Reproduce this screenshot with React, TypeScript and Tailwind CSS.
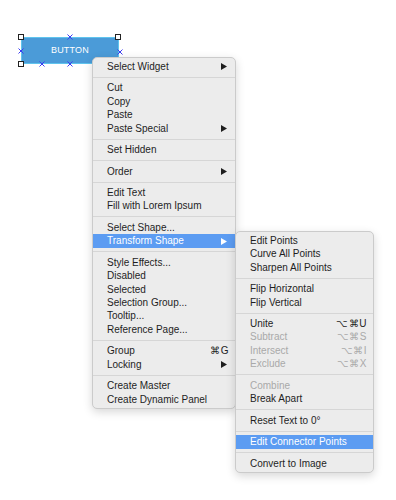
import React from "react";

type Item =
  | { sep: true }
  | { label: string; sub?: boolean; sc?: string; dis?: boolean; hl?: boolean; sep?: false };

const S: Item = { sep: true };

const mainItems: Item[] = [
  { label: "Select Widget", sub: true },
  S,
  { label: "Cut" },
  { label: "Copy" },
  { label: "Paste" },
  { label: "Paste Special", sub: true },
  S,
  { label: "Set Hidden" },
  S,
  { label: "Order", sub: true },
  S,
  { label: "Edit Text" },
  { label: "Fill with Lorem Ipsum" },
  S,
  { label: "Select Shape..." },
  { label: "Transform Shape", sub: true, hl: true },
  S,
  { label: "Style Effects..." },
  { label: "Disabled" },
  { label: "Selected" },
  { label: "Selection Group..." },
  { label: "Tooltip..." },
  { label: "Reference Page..." },
  S,
  { label: "Group", sc: "⌘G" },
  { label: "Locking", sub: true },
  S,
  { label: "Create Master" },
  { label: "Create Dynamic Panel" },
];

const subItems: Item[] = [
  { label: "Edit Points" },
  { label: "Curve All Points" },
  { label: "Sharpen All Points" },
  S,
  { label: "Flip Horizontal" },
  { label: "Flip Vertical" },
  S,
  { label: "Unite", sc: "⌥⌘U" },
  { label: "Subtract", sc: "⌥⌘S", dis: true },
  { label: "Intersect", sc: "⌥⌘I", dis: true },
  { label: "Exclude", sc: "⌥⌘X", dis: true },
  S,
  { label: "Combine", dis: true },
  { label: "Break Apart" },
  S,
  { label: "Reset Text to 0°" },
  S,
  { label: "Edit Connector Points", hl: true },
  S,
  { label: "Convert to Image" },
];

function Arrow({ white }: { white?: boolean }) {
  return (
    <svg width="6" height="7" viewBox="0 0 6 7" className="shrink-0">
      <polygon points="0,0 6,3.5 0,7" fill={white ? "#ffffff" : "#1e1e1e"} />
    </svg>
  );
}

function Menu({ items, className }: { items: Item[]; className: string }) {
  return (
    <div
      className={
        "absolute flex flex-col rounded-[5px] border border-[#cbcbcb] bg-[#ececec] pt-[2px] pb-[2px] shadow-[0_3px_10px_rgba(0,0,0,0.16)] " +
        className
      }
    >
      {items.map((it, i) =>
        it.sep ? (
          <div key={i} className="flex h-[8.1px] items-center">
            <div className="h-px w-full bg-[#d6d6d6]" />
          </div>
        ) : (
          <div
            key={i}
            className={
              "flex h-[13.4px] items-center justify-between pl-[14px] pt-[0.5px] text-[10px] leading-none " +
              (it.hl ? "bg-[#5c9cf2] text-white " : "") +
              (it.dis ? "text-[#a9a9a9] " : it.hl ? "" : "text-[#1e1e1e] ") +
              (it.sub ? "pr-[8px]" : "pr-[6px]")
            }
          >
            <span>{it.label}</span>
            {it.sub && <Arrow white={it.hl} />}
            {it.sc && <span className="tracking-[0.5px]">{it.sc}</span>}
          </div>
        )
      )}
    </div>
  );
}

function XMark({ className }: { className: string }) {
  return (
    <svg
      width="6"
      height="6"
      viewBox="0 0 6 6"
      className={"absolute " + className}
    >
      <path d="M0.5 0.5 L5.5 5.5 M5.5 0.5 L0.5 5.5" stroke="#3b3bf2" strokeWidth="1" />
    </svg>
  );
}

function Handle({ className }: { className: string }) {
  return (
    <div
      className={
        "absolute h-[6px] w-[6px] border border-[#222] bg-white " + className
      }
    />
  );
}

export default function App() {
  return (
    <div
      className="relative h-[500px] w-[396px] overflow-hidden bg-white"
      style={{ fontFamily: '"Liberation Sans", Arial, sans-serif' }}
    >
      {/* Button widget */}
      <div className="absolute left-[21px] top-[37px] flex h-[27px] w-[98px] items-center justify-center border border-[#5fc4ee] bg-[#4b9bd8] text-[9px] tracking-[0.2px] text-white">
        BUTTON
      </div>
      <Handle className="left-[18px] top-[34px]" />
      <Handle className="left-[115px] top-[34px]" />
      <Handle className="left-[18px] top-[61px]" />
      <XMark className="left-[67px] top-[34px]" />
      <XMark className="left-[18px] top-[48px]" />
      <XMark className="left-[117px] top-[49px]" />
      <XMark className="left-[39px] top-[61px]" />
      <XMark className="left-[67px] top-[61px]" />

      <Menu items={mainItems} className="left-[92px] top-[57px] w-[144px]" />
      <Menu items={subItems} className="left-[235px] top-[231px] w-[139px]" />
    </div>
  );
}
